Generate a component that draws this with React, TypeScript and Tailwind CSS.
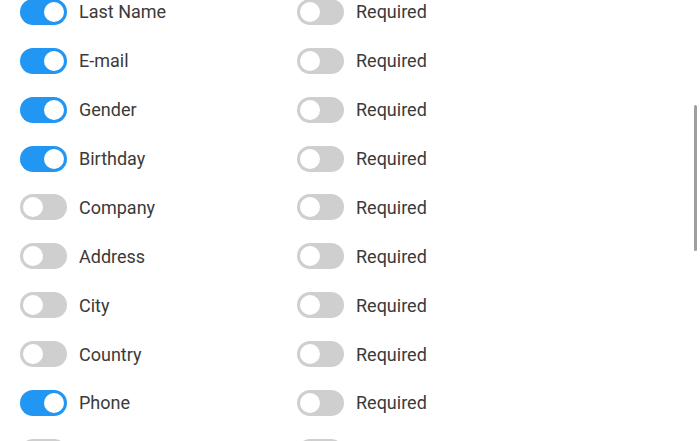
import { useState } from "react";

type Field = { label: string; enabled: boolean; required: boolean };

const FIELDS: Field[] = [
  { label: "Last Name", enabled: true, required: false },
  { label: "E-mail", enabled: true, required: false },
  { label: "Gender", enabled: true, required: false },
  { label: "Birthday", enabled: true, required: false },
  { label: "Company", enabled: false, required: false },
  { label: "Address", enabled: false, required: false },
  { label: "City", enabled: false, required: false },
  { label: "Country", enabled: false, required: false },
  { label: "Phone", enabled: true, required: false },
  { label: "Website", enabled: false, required: false },
];

function Toggle({ on, onClick }: { on: boolean; onClick: () => void }) {
  return (
    <button
      type="button"
      onClick={onClick}
      className={
        "relative w-[47px] h-[26px] rounded-full shrink-0 transition-colors " +
        (on ? "bg-[#2196f3]" : "bg-[#cfcfcf]")
      }
    >
      <span
        className={
          "absolute top-[1px] w-[24px] h-[24px] rounded-full bg-white border-2 transition-all " +
          (on ? "left-[22px] border-[#2196f3]" : "left-[1px] border-[#cfcfcf]")
        }
      />
    </button>
  );
}

export default function App() {
  const [fields, setFields] = useState(FIELDS);

  function flip(i: number, key: "enabled" | "required") {
    setFields((f) => f.map((x, j) => (j === i ? { ...x, [key]: !x[key] } : x)));
  }

  return (
    <div
      className="relative w-[700px] h-[441px] overflow-hidden bg-white text-[18px] text-[#3a3a3a]"
      style={{ fontFamily: "Roboto, 'Liberation Sans', sans-serif" }}
    >
      <div className="-mt-[12.5px]">
        {fields.map((f, i) => (
          <div key={f.label} className="flex items-center h-[48.875px]">
            <div className="flex items-center gap-[12px] pl-[20px] w-[297px]">
              <Toggle on={f.enabled} onClick={() => flip(i, "enabled")} />
              <span>{f.label}</span>
            </div>
            <div className="flex items-center gap-[12px]">
              <Toggle on={f.required} onClick={() => flip(i, "required")} />
              <span>Required</span>
            </div>
          </div>
        ))}
      </div>
      {/* scrollbar thumb */}
      <div className="absolute left-[694px] top-[105px] w-[3px] h-[146px] rounded-full bg-[#9e9e9e]" />
    </div>
  );
}
